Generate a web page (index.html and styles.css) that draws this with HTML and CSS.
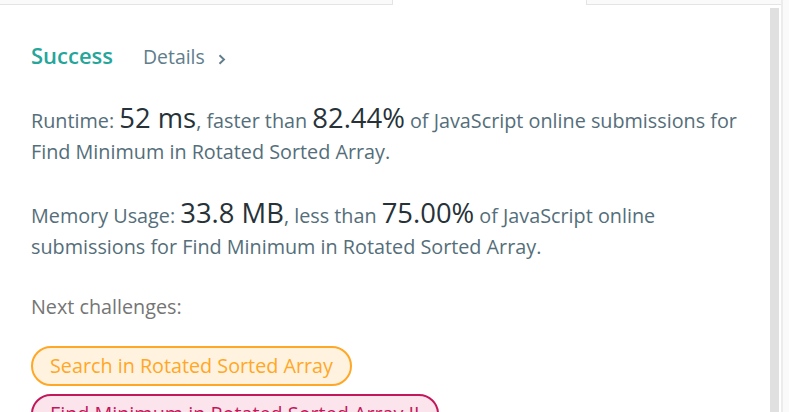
FILE: index.html
```html
<!DOCTYPE html>
<html>
<head>
<meta charset="utf-8">
<link rel="stylesheet" href="styles.css">
</head>
<body>
<div class="frame">
  <div class="main">
    <div class="tabs">
      <div class="tab-gap tab-gap-left"></div>
      <div class="tab-active"></div>
      <div class="tab-gap tab-gap-right"></div>
    </div>
    <div class="body">
      <div class="content">
        <div class="status-row">
          <span class="status">Success</span>
          <span class="details">Details
            <svg class="chev" width="8" height="11" viewBox="0 0 8 11"><path d="M1.5 1.2 L6 5.5 L1.5 9.8" fill="none" stroke="#607d8b" stroke-width="1.9"/></svg>
          </span>
        </div>
        <p class="stat">Runtime: <span class="big">52 ms</span>, faster than <span class="big">82.44%</span> of JavaScript online submissions for Find Minimum in Rotated Sorted Array.</p>
        <p class="stat stat-mem">Memory Usage: <span class="big">33.8 MB</span>, less than <span class="big">75.00%</span> of JavaScript online submissions for Find Minimum in Rotated Sorted Array.</p>
        <div class="next-title">Next challenges:</div>
        <div class="pills">
          <span class="pill pill-medium">Search in Rotated Sorted Array</span>
          <span class="pill pill-hard">Find Minimum in Rotated Sorted Array II</span>
        </div>
      </div>
      <div class="scrollbar"></div>
    </div>
  </div>
  <div class="edge"></div>
  <div class="outside"></div>
</div>
</body>
</html>
```

FILE: styles.css
```css
html, body {
  margin: 0;
  padding: 0;
  background: #ffffff;
  overflow: hidden;
}
body {
  font-family: "Open Sans", "Noto Sans", sans-serif;
  color: #546e7a;
}
.frame {
  display: flex;
  width: 789px;
  height: 412px;
  overflow: hidden;
}
.main {
  width: 781px;
  display: flex;
  flex-direction: column;
  background: #ffffff;
}
.edge {
  width: 2px;
  background: #ececec;
}
.outside {
  flex: 1;
  background: #fafafa;
}
.tabs {
  display: flex;
  height: 5px;
  flex: none;
}
.tab-gap {
  background: #fafafa;
  border-bottom: 1px solid #e4e4e4;
  height: 4px;
}
.tab-gap-left {
  width: 392px;
  border-right: 1px solid #e4e4e4;
}
.tab-active {
  width: 193px;
  background: #ffffff;
}
.tab-gap-right {
  flex: 1;
  border-left: 1px solid #e4e4e4;
}
.body {
  flex: 1;
  display: flex;
  min-height: 0;
}
.content {
  width: 721px;
  padding: 35px 18px 0 31px;
}
.scrollbar {
  width: 9px;
  margin-top: 3px;
  background: #e0e0e0;
}
.status-row {
  display: flex;
  align-items: baseline;
  height: 30px;
  line-height: 30px;
}
.status {
  font-size: 22px;
  font-weight: 600;
  color: #26a69a;
}
.details {
  margin-left: 30px;
  font-size: 19.4px;
  color: #607d8b;
}
.chev {
  margin-left: 8px;
  vertical-align: -1px;
}
.stat {
  margin: 34px 0 0 0;
  font-size: 19.8px;
  line-height: 30.5px;
}
.stat-mem {
  margin-top: 32px;
}
.big {
  font-size: 27.4px;
  line-height: 1;
  color: #263238;
}
.next-title {
  margin-top: 30px;
  font-size: 19.75px;
  line-height: 30px;
  color: #757575;
}
.pills {
  margin-top: 24px;
  display: flex;
  flex-direction: column;
  align-items: flex-start;
  gap: 8px;
}
.pill {
  display: inline-block;
  font-size: 19.75px;
  line-height: 36px;
  padding: 0 17px;
  border: 2px solid;
  border-radius: 20px;
  white-space: nowrap;
}
.pill-medium {
  color: #ffa726;
  border-color: #ffa726;
  background: #fff3e0;
}
.pill-hard {
  color: #c2185b;
  border-color: #c2185b;
  background: #fce4ec;
}
```
